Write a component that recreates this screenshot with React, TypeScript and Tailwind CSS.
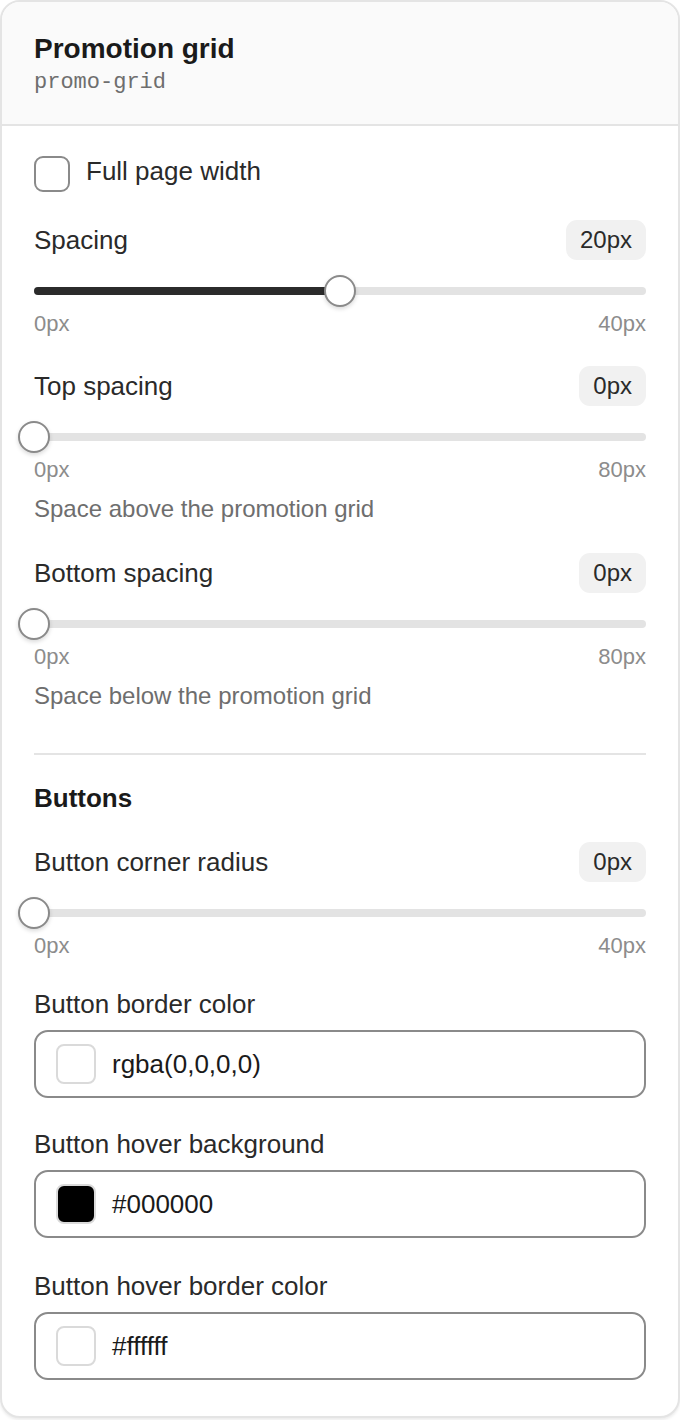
import { useState } from "react";

type SliderProps = {
  label: string;
  value: number;
  max: number;
  help?: string;
};

function SliderField({ label, value, max, help }: SliderProps) {
  const pct = (value / max) * 100;
  return (
    <div className="flex flex-col">
      <div className="flex h-10 items-center justify-between">
        <span className="text-[26px] leading-8 text-[#2a2a2a]">{label}</span>
        <span className="flex h-10 items-center rounded-[11px] bg-[#f1f1f1] px-3.5 text-[24px] text-[#2a2a2a]">
          {value}px
        </span>
      </div>
      <div className="relative mt-[15px] h-8">
        <div className="absolute left-0 right-0 top-[12px] h-2 rounded-full bg-[#e3e3e3]" />
        <div
          className="absolute left-0 top-[12px] h-2 rounded-full bg-[#2b2b2b]"
          style={{ width: `${pct}%` }}
        />
        <div
          className="absolute top-0 h-8 w-8 -translate-x-1/2 rounded-full border-2 border-[#8a8a8a] bg-white shadow-[0_2px_4px_rgba(0,0,0,0.15)]"
          style={{ left: `${pct}%` }}
        />
      </div>
      <div className="mt-[4px] flex justify-between text-[22px] leading-[26px] text-[#8c8c8c]">
        <span>0px</span>
        <span>{max}px</span>
      </div>
      {help && (
        <p className="mt-[12px] text-[24px] leading-7 text-[#6e6e6e]">{help}</p>
      )}
    </div>
  );
}

function ColorField({ label, value, swatch }: { label: string; value: string; swatch: string }) {
  return (
    <div className="flex flex-col">
      <span className="text-[26px] leading-8 text-[#2a2a2a]">{label}</span>
      <div className="mt-[10px] flex h-[68px] items-center gap-4 rounded-[14px] border-2 border-[#8a8a8a] bg-white px-5">
        <span
          className="h-10 w-10 rounded-lg border-2 border-[#dadada]"
          style={{ background: swatch }}
        />
        <span className="text-[26px] text-[#1a1a1a]">{value}</span>
      </div>
    </div>
  );
}

export default function App() {
  const [full, setFull] = useState(false);

  return (
    <div className="min-h-[1420px] bg-white" style={{ fontFamily: '"Liberation Sans", Arial, sans-serif' }}>
      <div className="overflow-hidden rounded-[20px] border-2 border-[#e4e4e4] bg-white shadow-[0_2px_3px_rgba(0,0,0,0.08)]">
        <div className="border-b-2 border-[#e4e4e4] bg-[#fafafa] px-8 pb-[28px] pt-[30px]">
          <h1 className="text-[28px] font-bold leading-[34px] text-[#1a1a1a]">Promotion grid</h1>
          <div
            className="mt-[4px] text-[22px] leading-[26px] text-[#6e6e6e]"
            style={{ fontFamily: '"Liberation Mono", "Courier New", monospace' }}
          >
            promo-grid
          </div>
        </div>

        <div className="flex flex-col px-8 pb-[36px] pt-[30px]">
          <label className="flex h-9 cursor-pointer items-center gap-4" onClick={() => setFull(!full)}>
            <span className="h-9 w-9 rounded-[9px] border-2 border-[#8a8a8a] bg-white" />
            <span className="-mt-1.5 text-[26px] text-[#2a2a2a]">Full page width</span>
          </label>

          <div className="mt-7">
            <SliderField label="Spacing" value={20} max={40} />
          </div>
          <div className="mt-[29px]">
            <SliderField label="Top spacing" value={0} max={80} help="Space above the promotion grid" />
          </div>
          <div className="mt-[30px]">
            <SliderField label="Bottom spacing" value={0} max={80} help="Space below the promotion grid" />
          </div>

          <div className="mt-[43px] h-0.5 bg-[#e4e4e4]" />

          <h2 className="mt-[27px] text-[26px] font-bold leading-8 text-[#1a1a1a]">Buttons</h2>

          <div className="mt-[28px]">
            <SliderField label="Button corner radius" value={0} max={40} />
          </div>

          <div className="mt-[29px]">
            <ColorField label="Button border color" value="rgba(0,0,0,0)" swatch="transparent" />
          </div>
          <div className="mt-[30px]">
            <ColorField label="Button hover background" value="#000000" swatch="#000000" />
          </div>
          <div className="mt-[32px]">
            <ColorField label="Button hover border color" value="#ffffff" swatch="#ffffff" />
          </div>
        </div>
      </div>
    </div>
  );
}
